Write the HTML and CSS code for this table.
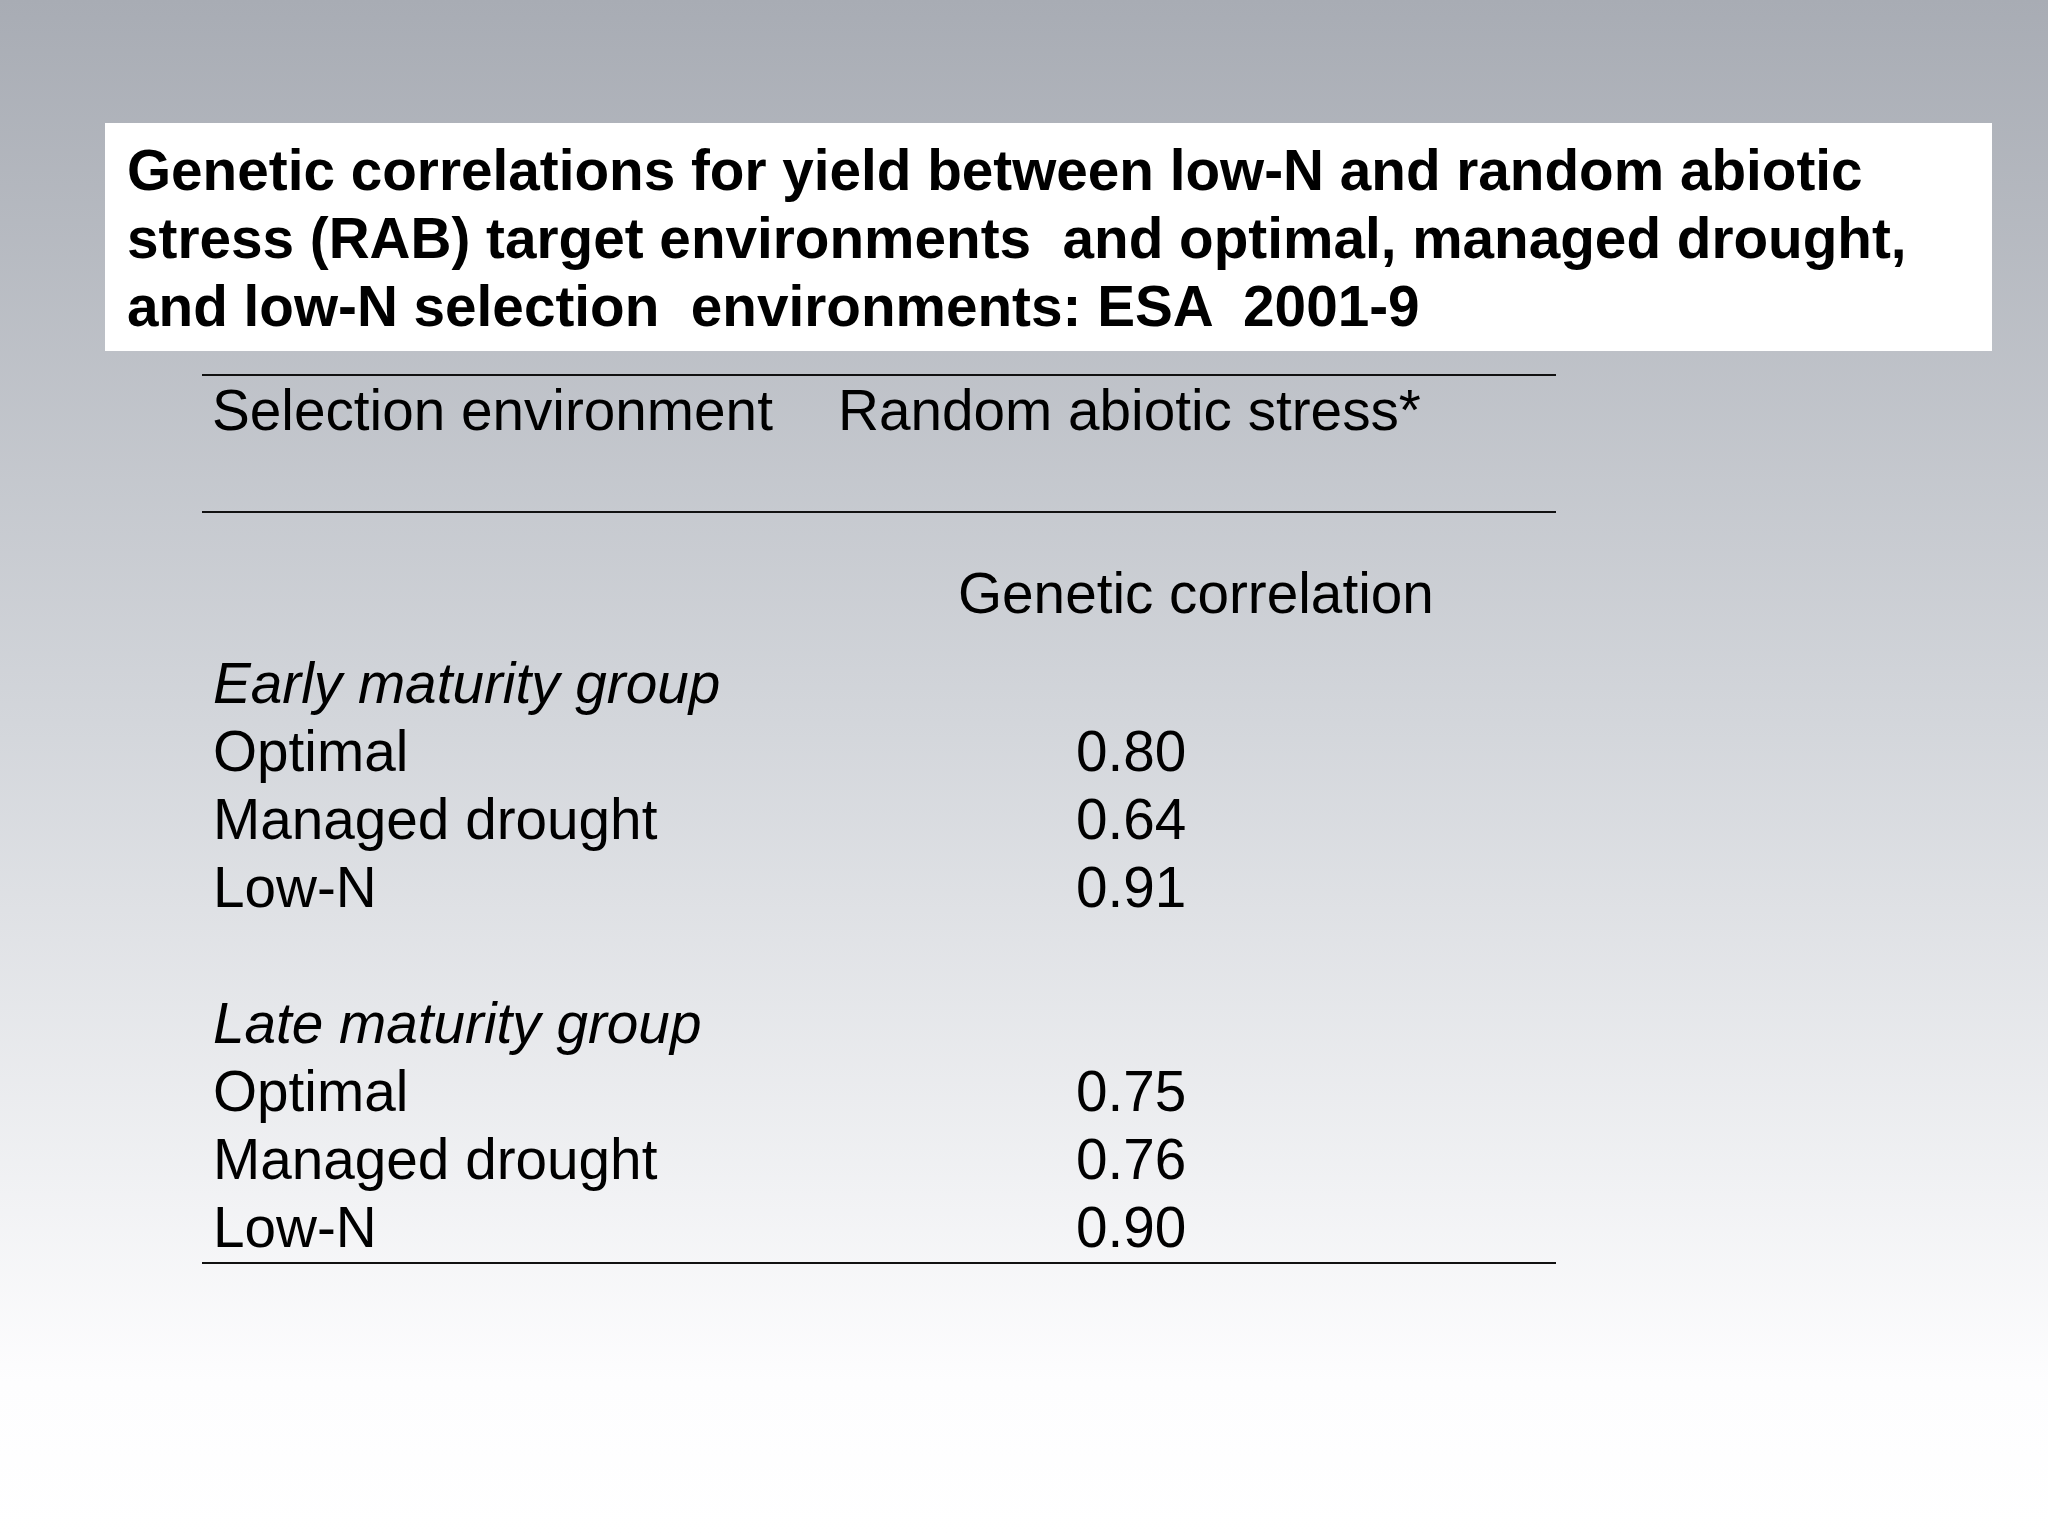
FILE: index.html
```html
<!DOCTYPE html>
<html>
<head>
<meta charset="utf-8">
<link rel="stylesheet" href="styles.css">
</head>
<body>
<div class="slide">
  <div class="title">
    <span class="tline">Genetic correlations for yield between low-N and random abiotic</span>
    <span class="tline">stress (RAB) target environments  and optimal, managed drought,</span>
    <span class="tline">and low-N selection  environments: ESA  2001-9</span>
  </div>
  <div class="table">
    <div class="head">
      <div class="hlab">Selection environment</div>
      <div class="hval">Random abiotic stress*</div>
    </div>
    <div class="gc">Genetic correlation</div>
    <div class="row"><div class="lab group">Early maturity group</div></div>
    <div class="row"><div class="lab">Optimal</div><div class="val">0.80</div></div>
    <div class="row"><div class="lab">Managed drought</div><div class="val">0.64</div></div>
    <div class="row"><div class="lab">Low-N</div><div class="val">0.91</div></div>
    <div class="row"></div>
    <div class="row"><div class="lab group">Late maturity group</div></div>
    <div class="row"><div class="lab">Optimal</div><div class="val">0.75</div></div>
    <div class="row"><div class="lab">Managed drought</div><div class="val">0.76</div></div>
    <div class="row"><div class="lab">Low-N</div><div class="val">0.90</div></div>
  </div>
</div>
</body>
</html>
```

FILE: styles.css
```css
html, body {
  margin: 0;
  padding: 0;
}
.slide {
  width: 2048px;
  height: 1536px;
  box-sizing: border-box;
  padding-top: 123px;
  background: linear-gradient(to bottom, #a8acb4 0%, #d3d6db 47%, #fdfdfe 90%, #ffffff 100%);
  font-family: "Liberation Sans", Arial, sans-serif;
  color: #000;
  overflow: hidden;
}
.title {
  margin-left: 105px;
  width: 1887px;
  height: 228px;
  box-sizing: border-box;
  padding: 13.6px 0 0 22px;
  background: #ffffff;
  font-weight: bold;
  font-size: 56.7px;
  line-height: 68px;
}
.tline {
  display: block;
  white-space: pre;
}
.table {
  margin: 23px 0 0 202px;
  width: 1354px;
  border-top: 2px solid #111;
  border-bottom: 2px solid #111;
  font-size: 56.7px;
  line-height: 68px;
}
.head {
  display: flex;
  height: 137px;
  padding-top: 1px;
  box-sizing: border-box;
  border-bottom: 2px solid #111;
}
.hlab {
  width: 636px;
  padding-left: 10px;
  box-sizing: border-box;
}
.hval {
  white-space: nowrap;
}
.gc {
  padding-left: 756px;
  margin-top: 47px;
  margin-bottom: 22px;
  height: 68px;
}
.row {
  display: flex;
  height: 68px;
}
.lab {
  width: 874px;
  padding-left: 11px;
  box-sizing: border-box;
  white-space: nowrap;
}
.group {
  font-style: italic;
}
.val {
  white-space: nowrap;
}
```
